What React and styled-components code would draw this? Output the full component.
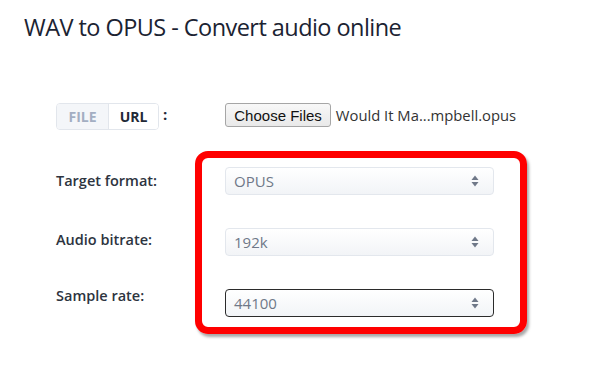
import React from "react";
import styled, { createGlobalStyle } from "styled-components";

const Global = createGlobalStyle`
  html, body { margin: 0; padding: 0; background: #ffffff; }
  body { font-family: "Open Sans", "Noto Sans", sans-serif; }
  * { box-sizing: border-box; }
`;

const Page = styled.div`
  width: 600px;
  height: 369px;
  padding: 8px 0 0 24px;
  overflow: hidden;
`;

const Title = styled.h1`
  margin: 0;
  font-size: 23.5px;
  font-weight: 400;
  line-height: 38px;
  color: #1b2332;
  letter-spacing: -0.55px;
`;

const UploadRow = styled.div`
  display: flex;
  align-items: center;
  margin: 57px 0 0 32px;
  height: 27px;
`;

const Toggle = styled.div`
  display: flex;
  height: 27px;
  border: 1px solid #e2e6ec;
  border-radius: 4px;
  overflow: hidden;
`;

const ToggleItem = styled.span`
  display: flex;
  align-items: center;
  justify-content: center;
  width: ${(p) => p.$w}px;
  font-size: 14px;
  font-weight: 700;
  color: ${(p) => (p.$active ? "#1f2937" : "#a3aec2")};
  background: ${(p) => (p.$active ? "#ffffff" : "#f4f6f9")};
  border-left: ${(p) => (p.$active ? "1px solid #e2e6ec" : "none")};
`;

const Colon = styled.span`
  margin-left: 4px;
  font-size: 15px;
  font-weight: 700;
  color: #1f2937;
  margin-top: -6px;
`;

const FileButton = styled.button`
  margin-left: 58px;
  height: 24px;
  padding: 0 8px;
  font-family: "Liberation Sans", Arial, sans-serif;
  font-size: 15px;
  color: #111;
  background: linear-gradient(#f8f8f8, #e9e9e9);
  border: 1px solid #a6a6a6;
  border-radius: 3px;
  margin-top: -3px;
`;

const FileName = styled.span`
  margin-left: 5px;
  font-size: 14.8px;
  color: #333333;
  margin-top: -3px;
`;

const FormArea = styled.div`
  display: flex;
  margin: 21px 0 0 32px;
`;

const Labels = styled.div`
  width: 139px;
  display: flex;
  flex-direction: column;
  padding-top: 20px;
`;

const Label = styled.div`
  height: 20px;
  line-height: 20px;
  font-size: 14.5px;
  font-weight: 600;
  color: #2d3440;
  margin-bottom: ${(p) => p.$mb}px;
`;

const Highlight = styled.div`
  width: 332px;
  height: 183px;
  border: 7px solid #ff0000;
  border-radius: 13px;
  box-shadow: 2px 3px 3px rgba(0, 0, 0, 0.35);
  padding: 9px 26px 0 23px;
  display: flex;
  flex-direction: column;
  gap: 33px;
`;

const Select = styled.div`
  position: relative;
  height: 28px;
  display: flex;
  align-items: center;
  padding-left: 8px;
  font-size: 15px;
  color: #6f7888;
  background: linear-gradient(#ffffff, #f2f4f7);
  border: 1px solid ${(p) => (p.$focused ? "#2b2b2b" : "#e3e7ed")};
  border-radius: 4px;
`;

const Arrows = styled.svg`
  position: absolute;
  right: 14px;
  top: 50%;
  transform: translateY(-50%);
`;

const SelectArrows = () => (
  <Arrows width="8" height="12" viewBox="0 0 8 12">
    <path d="M4 0.5 L7.5 5 H0.5 Z" fill="#6f7888" />
    <path d="M4 11.5 L7.5 7 H0.5 Z" fill="#6f7888" />
  </Arrows>
);

export default function App() {
  return (
    <>
      <Global />
      <Page>
        <Title>WAV to OPUS - Convert audio online</Title>
        <UploadRow>
          <Toggle>
            <ToggleItem $w={51}>FILE</ToggleItem>
            <ToggleItem $w={50} $active>URL</ToggleItem>
          </Toggle>
          <Colon>:</Colon>
          <FileButton>Choose Files</FileButton>
          <FileName>Would It Ma...mpbell.opus</FileName>
        </UploadRow>
        <FormArea>
          <Labels>
            <Label $mb={39}>Target format:</Label>
            <Label $mb={36}>Audio bitrate:</Label>
            <Label>Sample rate:</Label>
          </Labels>
          <Highlight>
            <Select>
              OPUS
              <SelectArrows />
            </Select>
            <Select>
              192k
              <SelectArrows />
            </Select>
            <Select $focused>
              44100
              <SelectArrows />
            </Select>
          </Highlight>
        </FormArea>
      </Page>
    </>
  );
}
